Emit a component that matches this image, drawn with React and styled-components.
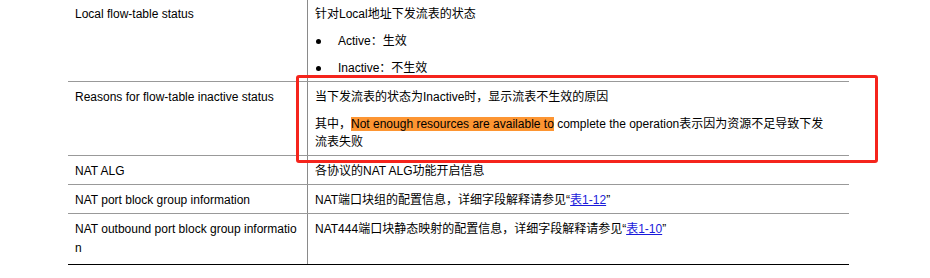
import React from "react";
import styled, { createGlobalStyle } from "styled-components";

const GlobalStyle = createGlobalStyle`
	html, body {
		margin: 0;
		padding: 0;
		background: #fff;
	}
	body {
		font-family: "Liberation Sans", Arial, "Noto Sans CJK SC", sans-serif;
		font-size: 12px;
		color: #000;
	}
`;

const Page = styled.div`
	width: 930px;
	height: 278px;
	overflow: hidden;
	padding-left: 68px;
	box-sizing: border-box;
`;

const Table = styled.div`
	position: relative;
	width: 781px;
	margin-top: -1px;
`;

const Row = styled.div`
	display: grid;
	grid-template-columns: 240px 1fr;
	border-bottom: 1px solid ${(p) => (p.$last ? "#000" : "#999")};
`;

const NameCell = styled.div`
	box-sizing: border-box;
	padding: 6px 6px ${(p) => (p.$last ? "6px" : "4px")} 7px;
	border-right: 1px solid #8a8a8a;
	line-height: ${(p) => (p.$last ? "19px" : "18px")};
	word-break: break-all;
`;

const DescCell = styled.div`
	padding: 6px 20px ${(p) => (p.$last ? "6px" : "4px")} 7px;
	line-height: 18px;
	word-break: break-all;
`;

const Para = styled.p`
	margin: 0;

	& + & {
		margin-top: 9px;
	}
`;

const Bullets = styled.ul`
	margin: 0;
	padding: 0;
	list-style: none;

	li {
		position: relative;
		margin-top: 9px;
		padding-left: 23px;
	}

	li::before {
		content: "";
		position: absolute;
		left: 1px;
		top: 7px;
		width: 5px;
		height: 5px;
		border-radius: 50%;
		background: #000;
	}
`;

const Mark = styled.span`
	background: #fd9532;
`;

const Link = styled.a`
	color: #1a1adb;
	text-decoration: underline;
`;

const Callout = styled.div`
	position: absolute;
	left: 228px;
	top: 76px;
	width: 582px;
	height: 88px;
	box-sizing: border-box;
	border: 3px solid #f5241c;
	border-radius: 3px;
	pointer-events: none;
`;

const rows = [
	{
		name: "Local flow-table status",
		body: (
			<>
				<Para>针对Local地址下发流表的状态</Para>
				<Bullets>
					<li>Active：生效</li>
					<li>Inactive：不生效</li>
				</Bullets>
			</>
		),
	},
	{
		name: "Reasons for flow-table inactive status",
		body: (
			<>
				<Para>当下发流表的状态为Inactive时，显示流表不生效的原因</Para>
				<Para>
					其中，<Mark>Not enough resources are available to</Mark> complete the
					operation表示因为资源不足导致下发流表失败
				</Para>
			</>
		),
	},
	{
		name: "NAT ALG",
		body: <Para>各协议的NAT ALG功能开启信息</Para>,
	},
	{
		name: "NAT port block group information",
		body: (
			<Para>
				NAT端口块组的配置信息，详细字段解释请参见“<Link href="#">表1-12</Link>”
			</Para>
		),
	},
	{
		name: "NAT outbound port block group information",
		body: (
			<Para>
				NAT444端口块静态映射的配置信息，详细字段解释请参见“<Link href="#">表1-10</Link>”
			</Para>
		),
		last: true,
	},
];

const App = () => {
	return (
		<>
			<GlobalStyle />
			<Page>
				<Table>
					{rows.map((row) => (
						<Row key={row.name} $last={row.last}>
							<NameCell $last={row.last}>{row.name}</NameCell>
							<DescCell $last={row.last}>{row.body}</DescCell>
						</Row>
					))}
					<Callout />
				</Table>
			</Page>
		</>
	);
};

export default App;
